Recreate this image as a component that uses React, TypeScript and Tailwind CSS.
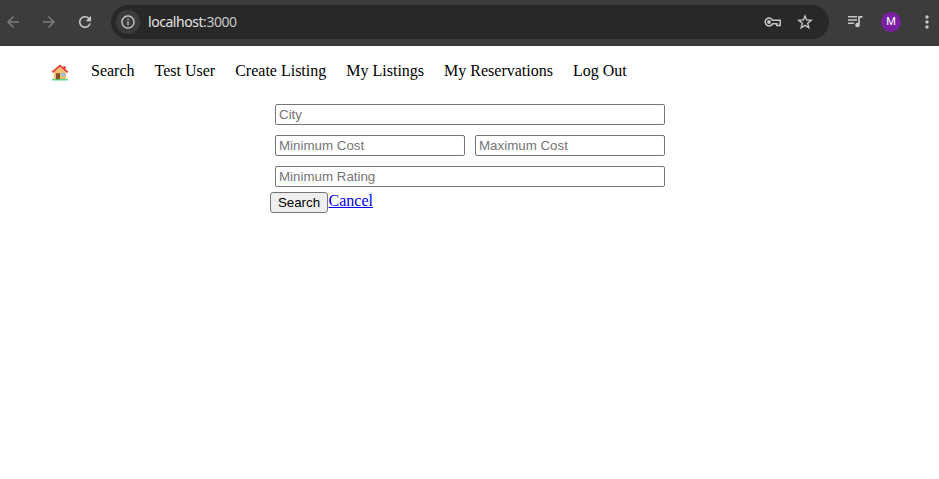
import React from "react";
import { MdArrowBack, MdArrowForward, MdInfoOutline, MdMoreVert } from "react-icons/md";

function HouseIcon() {
  return (
    <svg width="18" height="18" viewBox="0 0 18 18" aria-hidden="true">
      <path d="M12.3 2.2h2.4v5h-2.4z" fill="#c4493c" />
      <path d="M2.8 7L9 2.4l6.2 4.6v8.5H2.8z" fill="#f3bd74" />
      <path d="M1.2 8.3L9 1.6l7.8 6.7" fill="none" stroke="#ea4640" strokeWidth="1.8" />
      <path d="M5 9.2h4v6.3H5z" fill="#85512f" />
      <path d="M10.8 9h3.2v3.4h-3.2z" fill="#83c5ee" />
      <path d="M1 15.8h16" stroke="#35cf70" strokeWidth="1.2" />
    </svg>
  );
}

function ReloadIcon() {
  return (
    <svg width="18" height="18" viewBox="0 0 24 24" fill="currentColor" stroke="currentColor" strokeWidth="0.2" aria-hidden="true">
      <path d="M17.65 6.35A7.958 7.958 0 0 0 12 4c-4.42 0-7.99 3.58-7.99 8s3.57 8 7.99 8c3.73 0 6.84-2.55 7.73-6h-2.08A5.99 5.99 0 0 1 12 18c-3.31 0-6-2.69-6-6s2.69-6 6-6c1.66 0 3.14.69 4.22 1.78L13 11h7V4z" />
    </svg>
  );
}

function StarIcon() {
  return (
    <svg width="18" height="18" viewBox="0 0 18 18" fill="none" stroke="currentColor" strokeWidth="1.4" className="ml-[13px]" aria-hidden="true">
      <path d="M9 3L10.6 6.9L15.2 7.3L11.7 10.3L12.8 14.8L9 12.4L5.2 14.8L6.3 10.3L2.8 7.3L7.4 6.9Z" />
    </svg>
  );
}

function KeyIcon() {
  return (
    <svg width="20" height="14" viewBox="0 0 20 14" fill="none" stroke="currentColor" strokeWidth="1.5" aria-hidden="true">
      <path d="M9.6 5.3A3.9 3.9 0 1 0 9.6 8.7H13.8V10.6H17.2V5.3Z" />
      <circle cx="6" cy="7" r="1.9" fill="currentColor" stroke="none" />
    </svg>
  );
}

function QueueIcon() {
  return (
    <svg width="16" height="14" viewBox="0 0 16 14" aria-hidden="true">
      <path d="M1 1.8h9M1 5h9M1 8.2h6" stroke="currentColor" strokeWidth="1.6" />
      <path d="M12 10V1.9h3.5" fill="none" stroke="currentColor" strokeWidth="1.7" />
      <circle cx="10.5" cy="10" r="2.3" fill="currentColor" />
    </svg>
  );
}

function BrowserBar() {
  return (
    <header className="flex h-[46px] items-start border-b border-[#393939] bg-[#3c3c3c] font-['Noto_Sans',sans-serif] text-[#c7c7c7]">
      <div className="flex h-11 w-[111px] shrink-0 items-center gap-[18px] pl-1">
        <MdArrowBack size={18} className="text-[#7c7c7c]" />
        <MdArrowForward size={18} className="text-[#7c7c7c]" />
        <ReloadIcon />
      </div>
      <div className="mt-[5px] flex h-[34px] w-[718px] shrink-0 items-center rounded-full bg-[#282828] pl-[5px] pr-[15px]">
        <span className="flex size-6 items-center justify-center rounded-full bg-[#3c3c3c]">
          <MdInfoOutline size={16} />
        </span>
        <span className="ml-2 flex-1 text-[14px] leading-5 tracking-[-0.45px] text-[#c7c7c7]">
          <span className="text-[#e3e3e3]">localhost</span>:3000
        </span>
        <KeyIcon />
        <StarIcon />
      </div>
      <div className="flex h-11 items-center pl-[18px]">
        <QueueIcon />
        <span className="ml-[18px] flex size-5 items-center justify-center rounded-full bg-[#7b1fa2] font-['Roboto',sans-serif] text-[11px] font-normal text-white">
          M
        </span>
        <MdMoreVert size={20} className="ml-4" />
      </div>
    </header>
  );
}

const links = ["Search", "Test User", "Create Listing", "My Listings", "My Reservations", "Log Out"];

const field =
  "h-[21px] min-w-0 flex-1 rounded-[2px] border border-[#767676] bg-white px-[3px] font-['Liberation_Sans',Arial,sans-serif] text-[13.333px] leading-[15px] text-black placeholder:text-[#757575]";

export default function App() {
  return (
    <div className="min-h-screen bg-white font-['Liberation_Serif','Times_New_Roman',serif] text-[16px] leading-[18px] text-black">
      <BrowserBar />
      <nav className="flex gap-5 pl-[51px] pt-4">
        <a href="#" className="mt-[2px] w-5">
          <HouseIcon />
        </a>
        {links.map((label) => (
          <a key={label} href="#">
            {label}
          </a>
        ))}
      </nav>
      <form className="ml-[270px] mt-[22px] w-[400px]">
        <div className="flex flex-col gap-[10px] px-[5px]">
          <div className="flex">
            <input className={field} placeholder="City" />
          </div>
          <div className="flex gap-[10px]">
            <input className={field} placeholder="Minimum Cost" />
            <input className={field} placeholder="Maximum Cost" />
          </div>
          <div className="flex">
            <input className={field} placeholder="Minimum Rating" />
          </div>
        </div>
        <div className="mt-[5px] flex">
          <button
            type="button"
            className="h-[21px] w-[58px] rounded-[3px] border border-[#767676] bg-[#efefef] font-['Liberation_Sans',Arial,sans-serif] text-[13.333px] leading-[15px]"
          >
            Search
          </button>
          <a href="#" className="ml-[0.5px] text-[#0000ee] underline">
            Cancel
          </a>
        </div>
      </form>
    </div>
  );
}
